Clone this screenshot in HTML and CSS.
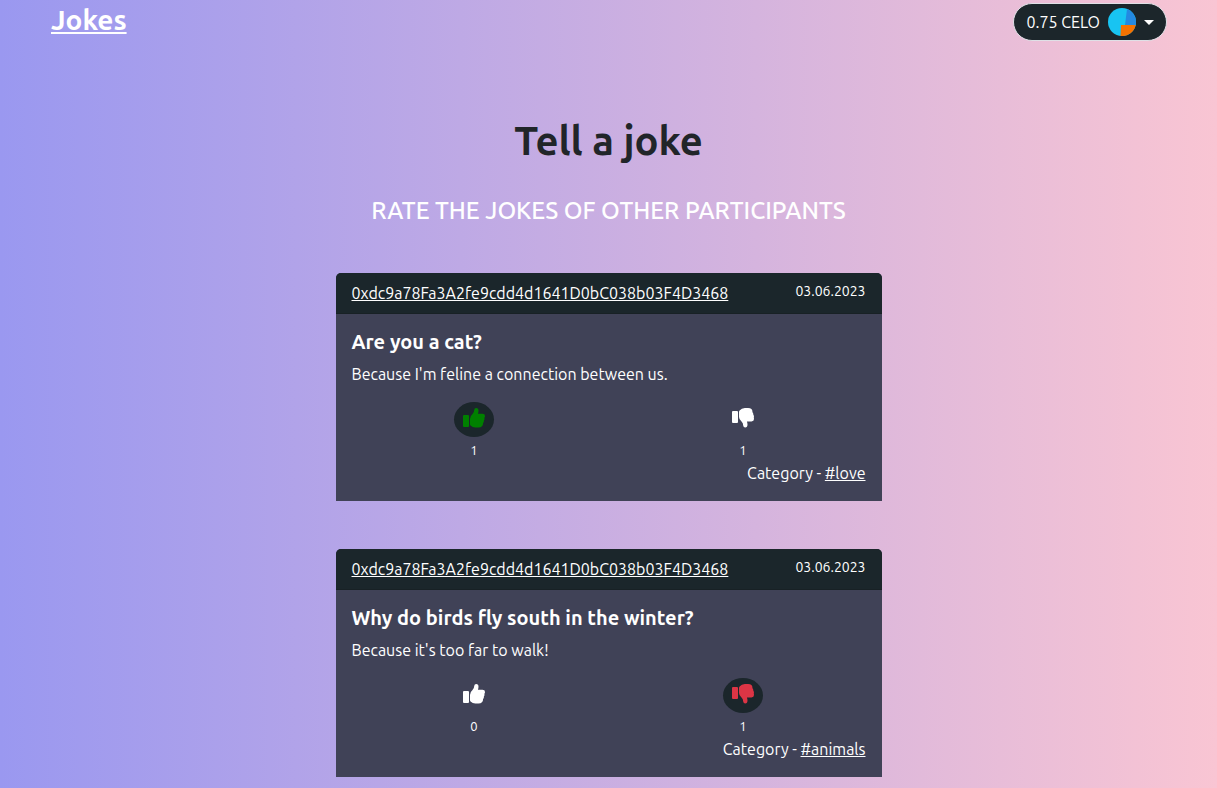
FILE: index.html
```html
<!DOCTYPE html>
<html lang="en">
<head>
<meta charset="utf-8">
<meta name="viewport" content="width=device-width, initial-scale=1">
<title>Jokes</title>
<link rel="stylesheet" href="styles.css">
</head>
<body>
<svg class="sprite" aria-hidden="true">
  <symbol id="thumb-up" viewBox="0 0 22 20">
    <path d="M1 7h4q1 0 1 1v10q0 1-1 1H1q-1 0-1-1V8q0-1 1-1z"/>
    <path d="M7 11Q7 8 9.500 6 11.200 4.500 11.200 2 11.400 0 13.200 0q2.300 0 2.300 2.700 0 1.500-.6 3h4.600q2.500.1 2.500 2.300 0 1-.6 1.700.5 1.500-.5 2.800.2 1.600-.8 2.600 0 4.400-4.600 4.400h-3.200Q9.500 19.500 7.600 17.500 7 17 7 16z"/>
  </symbol>
  <symbol id="thumb-down" viewBox="0 0 22 20">
    <path d="M1 3h4q1 0 1 1v10q0 1-1 1H1q-1 0-1-1V4q0-1 1-1z"/>
    <path d="M7 4q0-1 .6-1.500Q9.500 0 12.900 0h3.200q4.400 0 4.400 4.200 1 1 .8 2.600 1 1.200.5 2.700.2.700.2 1.500 0 2.300-2.500 2.400h-4.600q.6 1.500.6 3 0 3-2.300 3.100-1.800 0-2-2 0-2.500-1.700-4Q7 11.500 7 9z"/>
  </symbol>
</svg>
<nav class="navbar">
  <a class="brand" href="#">Jokes</a>
  <button class="wallet" type="button">
    <span>0.75 CELO</span>
    <svg class="avatar" viewBox="0 0 28 28" aria-hidden="true">
      <circle cx="14" cy="14" r="14" fill="#18c4f2"/>
      <path d="M19 1A14 14 0 0 1 27.700 17H17z" fill="#2489e1"/>
      <path d="M13 17h14.700A14 14 0 0 1 12.500 28z" fill="#f57200"/>
    </svg>
    <span class="caret"></span>
  </button>
</nav>
<main class="page">
  <h1 class="title">Tell a joke</h1>
  <h2 class="subtitle">RATE THE JOKES OF OTHER PARTICIPANTS</h2>
  <article class="card">
    <header class="card-header">
      <a class="address" href="#">0xdc9a78Fa3A2fe9cdd4d1641D0bC038b03F4D3468</a>
      <time class="date" datetime="2023-06-03">03.06.2023</time>
    </header>
    <div class="card-body">
      <h3 class="question">Are you a cat?</h3>
      <p class="answer">Because I'm feline a connection between us.</p>
      <div class="votes">
        <div class="vote">
          <button class="vote-button liked" type="button" aria-label="Like"><svg class="icon"><use href="#thumb-up"/></svg></button>
          <span class="count">1</span>
        </div>
        <div class="vote">
          <button class="vote-button" type="button" aria-label="Dislike"><svg class="icon"><use href="#thumb-down"/></svg></button>
          <span class="count">1</span>
        </div>
      </div>
      <p class="category">Category - <a href="#">#love</a></p>
    </div>
  </article>
  <article class="card">
    <header class="card-header">
      <a class="address" href="#">0xdc9a78Fa3A2fe9cdd4d1641D0bC038b03F4D3468</a>
      <time class="date" datetime="2023-06-03">03.06.2023</time>
    </header>
    <div class="card-body">
      <h3 class="question">Why do birds fly south in the winter?</h3>
      <p class="answer">Because it's too far to walk!</p>
      <div class="votes">
        <div class="vote">
          <button class="vote-button" type="button" aria-label="Like"><svg class="icon"><use href="#thumb-up"/></svg></button>
          <span class="count">0</span>
        </div>
        <div class="vote">
          <button class="vote-button disliked" type="button" aria-label="Dislike"><svg class="icon"><use href="#thumb-down"/></svg></button>
          <span class="count">1</span>
        </div>
      </div>
      <p class="category">Category - <a href="#">#animals</a></p>
    </div>
  </article>
</main>
</body>
</html>
```
FILE: styles.css
```css
* { box-sizing: border-box; }
body {
  margin: 0;
  min-height: 100vh;
  background: linear-gradient(to right, #9a98f0, #f9c5d3);
  color: #fff;
  font: 16px/24px Ubuntu, "Noto Sans", sans-serif;
}
h1, h2, h3, p { margin: 0; }
h1, h2, h3, .brand {
  font-family: "Ubuntu Medium", Ubuntu, "Noto Sans", sans-serif;
  font-weight: 500;
}
h1, h3, .brand { font-weight: 600; }
a { color: inherit; }
button { font: inherit; color: inherit; cursor: pointer; }
.sprite { display: none; }
.navbar {
  display: flex;
  align-items: flex-start;
  justify-content: space-between;
  padding: 3px 50px 0 51px;
}
.brand { font-size: 28px; line-height: 34px; }
.wallet {
  display: flex;
  align-items: center;
  gap: 8px;
  height: 38px;
  padding: 0 12px;
  border: 1px solid #dfe0e6;
  border-radius: 50px;
  background: #1c262b;
}
.avatar { width: 28px; height: 28px; }
.caret {
  border: 5px solid transparent;
  border-top-color: #fff;
  border-bottom: 0;
}
.page {
  max-width: 546px;
  margin: 0 auto;
  padding-top: 76px;
}
.title {
  color: #212529;
  font-size: 40px;
  line-height: 48px;
  text-align: center;
}
.subtitle {
  margin: 32px 0 48px;
  font-size: 24px;
  line-height: 28px;
  text-align: center;
}
.card {
  margin-bottom: 48px;
  border-radius: 5px 5px 0 0;
  background: #404257;
  overflow: hidden;
}
.card-header {
  display: flex;
  justify-content: space-between;
  padding: 8px 16px;
  border-bottom: 1px solid #182125;
  background: #1b262b;
}
.date { font-size: 14px; line-height: 20px; }
.card-body { padding: 16px; }
.question { font-size: 20px; line-height: 24px; }
.answer { margin: 8px 0 16px; }
.votes {
  display: grid;
  grid-template-columns: 1fr 1fr;
  margin: 0 -12px;
}
.vote { display: flex; flex-direction: column; align-items: center; }
.vote-button {
  width: 40px;
  height: 35px;
  padding: 0 0 3px;
  border: 0;
  border-radius: 50%;
  background: none;
  display: grid;
  place-items: center;
}
.icon { width: 22px; height: 20px; fill: currentColor; }
.liked { background: #1b262b; color: green; }
.disliked { background: #1b262b; color: #dc3545; }
.count { padding-top: 2px; font-size: 13px; line-height: 22px; }
.category { text-align: right; }
```
